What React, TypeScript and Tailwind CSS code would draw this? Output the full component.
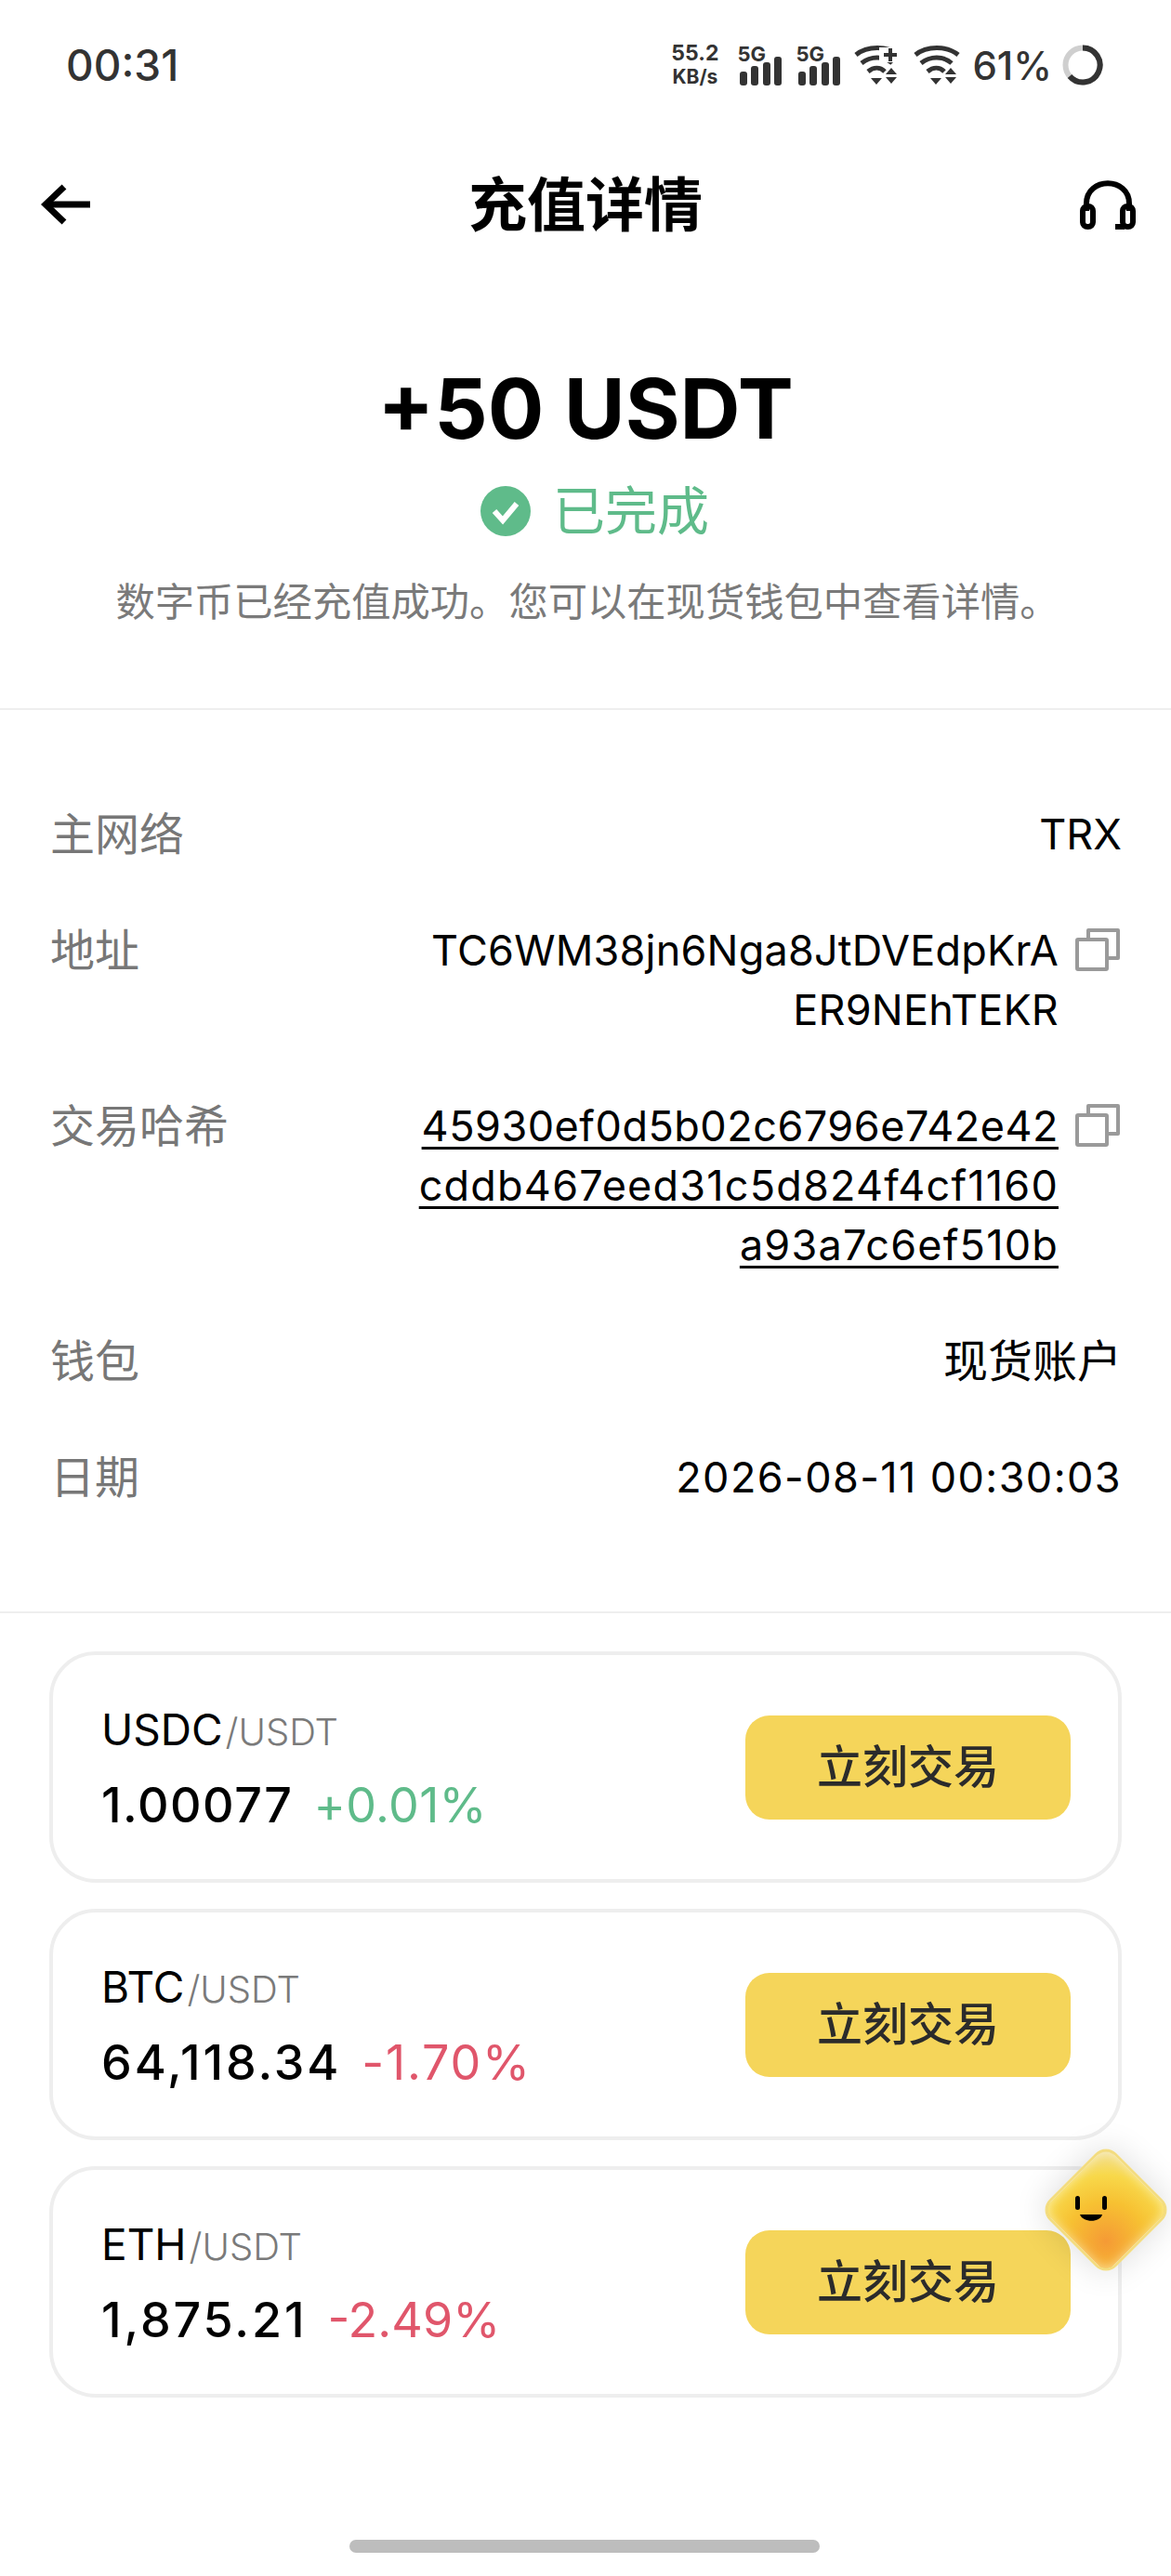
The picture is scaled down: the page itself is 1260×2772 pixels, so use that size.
const font = 'font-["Inter","Noto_Sans_CJK_SC",sans-serif]';

function Signal() {
  return (
    <div className="w-[48px] h-[44px] relative">
      <span className="absolute left-0 top-[-3px] text-[22px] leading-[26px] font-bold text-[#333]">5G</span>
      <svg width="48" height="44" viewBox="0 0 48 44" className="absolute left-0 top-0">
        <rect x="3" y="29" width="8" height="15" rx="3" fill="#333" />
        <rect x="15" y="23" width="8" height="21" rx="3" fill="#333" />
        <rect x="28" y="19" width="8" height="25" rx="3" fill="#333" />
        <rect x="40" y="13" width="8" height="31" rx="3" fill="#333" />
      </svg>
    </div>
  );
}

function Wifi({ plus }: { plus?: boolean }) {
  return (
    <svg width="52" height="44" viewBox="0 0 52 44" fill="none">
      <path d="M3 11 C15 1 37 1 49 11" stroke="#333" strokeWidth="5" />
      <path d="M9 20 C19 12 33 12 42 20" stroke="#333" strokeWidth="5" />
      <path d="M16 29 C22 24 29 24 34 29" stroke="#333" strokeWidth="5" />
      <path d="M19 36 H31 L25 43 Z" fill="#333" />
      <path d="M41 25 L47 32 H35 Z" fill="#333" />
      <path d="M35 35 H47 L41 42 Z" fill="#333" />
      {plus && (
        <>
          <rect x="28" y="3" width="24" height="16" fill="#fff" />
          <path d="M40 4 V18 M33 11 H47" stroke="#333" strokeWidth="4" />
        </>
      )}
    </svg>
  );
}

function CopyIcon() {
  return (
    <svg width="48" height="46" viewBox="0 0 48 46" fill="none" stroke="#9a9a9a" strokeWidth="4" strokeLinejoin="round" className="shrink-0 mt-[8px]">
      <rect x="2" y="12" width="32" height="32" rx="1" />
      <path d="M14 11 V2 H46 V32 H35" />
    </svg>
  );
}

function Row({ label, children }: { label: string; children: React.ReactNode }) {
  return (
    <div className="flex justify-between items-start">
      <div className="text-[48px] leading-[64px] text-[#777] shrink-0">{label}</div>
      {children}
    </div>
  );
}

function PairCard({ base, price, change, priceTrack, changeTrack, up }: { base: string; price: string; change: string; priceTrack: string; changeTrack: string; up?: boolean }) {
  return (
    <div className="h-[249px] rounded-[50px] border-[4px] border-[#eeeeee] flex items-center justify-between pl-[52px] pr-[51px]">
      <div className="flex flex-col">
        <div className="flex items-baseline h-[60px]">
          <span className="text-[46px] leading-[60px] text-black">{base}</span>
          <span className="text-[40px] leading-[60px] font-light text-[#7a7a7a] ml-[3px]">/USDT</span>
        </div>
        <div className="flex items-baseline mt-[22px] h-[60px]">
          <span className={`text-[52px] leading-[60px] text-black font-medium ${priceTrack}`}>{price}</span>
          <span className={`text-[52px] leading-[60px] ml-[22px] ${changeTrack} ${up ? 'text-[#5fbb8a]' : 'text-[#e0566b]'}`}>{change}</span>
        </div>
      </div>
      <div className="w-[350px] h-[112px] rounded-[26px] bg-[#f5d55a] flex items-center justify-center text-[49px] font-medium text-[#2b2b2b]">
        立刻交易
      </div>
    </div>
  );
}

export default function App() {
  const rows = [
    { base: 'USDC', price: '1.00077', change: '+0.01%', up: true, priceTrack: 'tracking-[1.5px]', changeTrack: 'tracking-[0.3px]' },
    { base: 'BTC', price: '64,118.34', change: '-1.70%', priceTrack: 'tracking-[2.9px]', changeTrack: 'tracking-[1.8px]' },
    { base: 'ETH', price: '1,875.21', change: '-2.49%', priceTrack: 'tracking-[2.9px]', changeTrack: 'tracking-[0px]' },
  ];

  return (
    <div className={`${font} relative w-[1260px] h-[2772px] overflow-hidden bg-white flex flex-col`}>
      {/* status bar */}
      <div className="h-[140px] pl-[71px] pr-[73px] flex items-center justify-between shrink-0">
        <span className="text-[46px] font-medium text-[#333]">00:31</span>
        <div className="flex items-center">
          <div className="flex flex-col items-center font-bold text-[#333] text-[23px] leading-[25px] mr-[20px]">
            <span>55.2</span>
            <span className="text-[21px]">KB/s</span>
          </div>
          <Signal />
          <div className="w-[15px]" />
          <Signal />
          <div className="w-[14px]" />
          <Wifi plus />
          <div className="w-[12px]" />
          <Wifi />
          <span className="text-[42px] font-medium text-[#333] ml-[12px] mr-[11px]">61%</span>
          <svg width="44" height="44" viewBox="0 0 44 44" fill="none">
            <circle cx="22" cy="22" r="18.5" stroke="#cfcfcf" strokeWidth="6" />
            <path d="M22 3.5 A18.5 18.5 0 1 1 8 34" stroke="#333" strokeWidth="6" />
          </svg>
        </div>
      </div>

      {/* nav */}
      <div className="h-[160px] pl-[44px] pr-[38px] flex items-center justify-between shrink-0">
        <svg width="54" height="44" viewBox="0 0 54 44" fill="none" stroke="#000" strokeWidth="7">
          <path d="M25 3 L5 22 L25 41" />
          <path d="M6 22 H53" />
        </svg>
        <div className="text-[63px] font-bold text-black">充值详情</div>
        <svg width="60" height="54" viewBox="0 0 60 54" fill="none" stroke="#000" strokeWidth="6">
          <path d="M7 34 V26 C7 -3 53 -3 53 26 V34" />
          <rect x="3" y="29" width="11" height="22" rx="5" />
          <rect x="46" y="29" width="11" height="22" rx="5" />
          <path d="M38 51 H48" />
        </svg>
      </div>

      {/* summary */}
      <div className="flex flex-col items-center border-b-[2px] border-[#eeeeee] h-[464px] shrink-0 pt-[85px]">
        <div className="text-[90px] leading-[110px] font-bold text-black">+50 USDT</div>
        <div className="flex items-center mt-[20px] h-[70px] ml-[20px]">
          <svg width="54" height="54" viewBox="0 0 54 54">
            <circle cx="27" cy="27" r="27" fill="#5fbb8a" />
            <path d="M15 27 L24 37 L39 19" fill="none" stroke="#fff" strokeWidth="6" />
          </svg>
          <span className="text-[56px] text-[#5fbb8a] ml-[24px]">已完成</span>
        </div>
        <div className="text-[42.3px] leading-[60px] mt-[33px] ml-[4px] text-[#7a7a7a]">数字币已经充值成功。您可以在现货钱包中查看详情。</div>
      </div>

      {/* details */}
      <div className="pl-[54px] pr-[53px] pt-[102px] h-[972px] border-b-[2px] border-[#eeeeee] flex flex-col gap-[61px] shrink-0">
        <Row label="主网络">
          <div className="text-[45px] leading-[64px] text-black">TRX</div>
        </Row>
        <Row label="地址">
          <div className="flex gap-[18px] mr-[2px]">
            <div className="text-[45px] leading-[64px] text-black text-right w-[700px] tracking-[0.2px]">
              TC6WM38jn6Nga8JtDVEdpKrA<br />ER9NEhTEKR
            </div>
            <CopyIcon />
          </div>
        </Row>
        <Row label="交易哈希">
          <div className="flex gap-[18px] mr-[2px]">
            <div className="text-[45px] leading-[64px] text-black text-right underline underline-offset-[6px] decoration-[3px] w-[700px]">
              <span className="tracking-[0.5px]">45930ef0d5b02c6796e742e42</span><br />
              <span className="tracking-[1.2px]">cddb467eed31c5d824f4cf1160</span><br />
              <span className="tracking-[1.2px]">a93a7c6ef510b</span>
            </div>
            <CopyIcon />
          </div>
        </Row>
        <Row label="钱包">
          <div className="text-[48px] leading-[64px] text-black">现货账户</div>
        </Row>
        <Row label="日期">
          <div className="text-[45px] leading-[64px] text-black tracking-[1.4px]">2026-08-11 00:30:03</div>
        </Row>
      </div>

      {/* pairs */}
      <div className="px-[53px] pt-[41px] flex flex-col gap-[28px]">
        {rows.map((r) => (
          <PairCard key={r.base} {...r} />
        ))}
      </div>

      {/* home indicator */}
      <div className="absolute bottom-[25px] left-[376px] w-[506px] h-[14px] rounded-full bg-[#bdbdbd]" />

      {/* floating mascot */}
      <div className="absolute left-[1139px] top-[2327px] w-[102px] h-[102px] rotate-45 rounded-[16px] border-[3px] border-[#f3dc80] bg-[radial-gradient(circle_at_75%_75%,#f59a35_0%,#f7c132_42%,#f8d84a_70%,#f1e1a4_100%)] shadow-[0_0_36px_rgba(0,0,0,0.14),inset_0_0_12px_rgba(255,255,255,0.5)]" />
      <svg width="36" height="30" viewBox="0 0 36 30" className="absolute left-[1156px] top-[2362px]">
        <rect x="1" y="1" width="5" height="15" rx="2.5" fill="#000" />
        <rect x="30" y="1" width="5" height="15" rx="2.5" fill="#000" />
        <path d="M6 21 H30 C28 30 9 30 6 21 Z" fill="#000" />
      </svg>
    </div>
  );
}
